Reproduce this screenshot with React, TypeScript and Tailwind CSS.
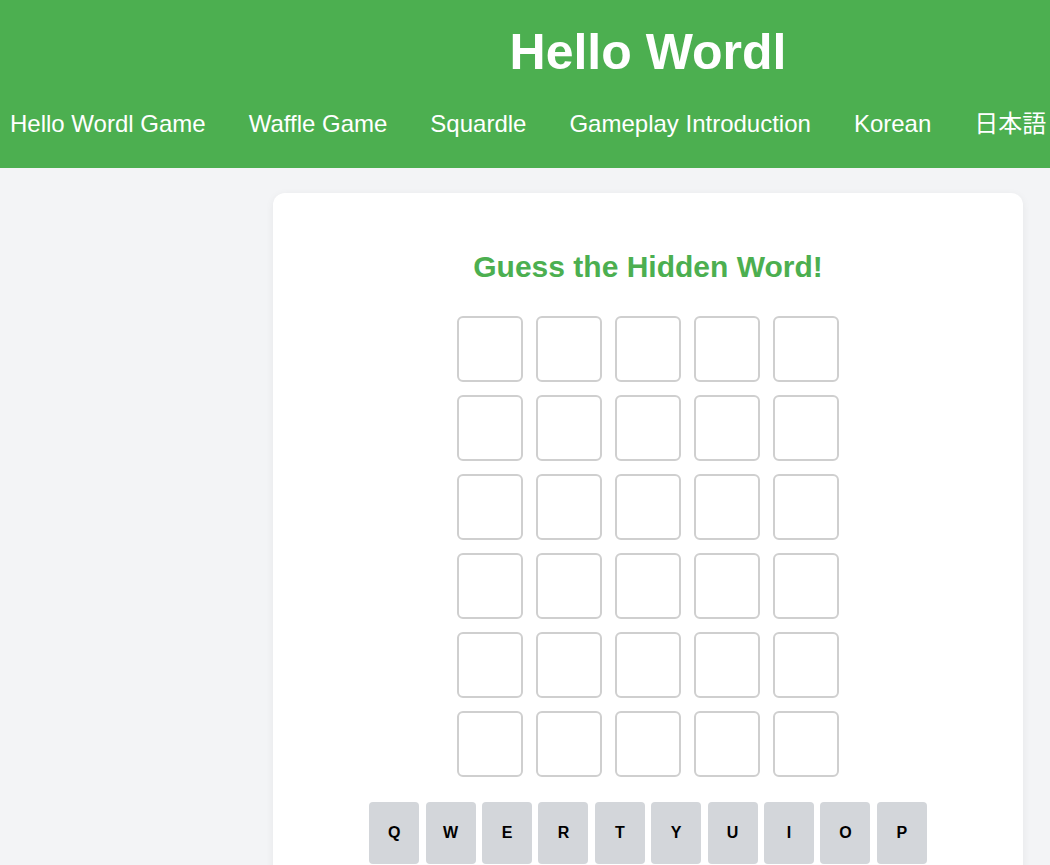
import React from 'react';

const NAV_LINKS = ['Hello Wordl Game', 'Waffle Game', 'Squardle', 'Gameplay Introduction', 'Korean', '日本語', 'Español'];
const KEY_ROWS = [
  ['Q', 'W', 'E', 'R', 'T', 'Y', 'U', 'I', 'O', 'P'],
  ['A', 'S', 'D', 'F', 'G', 'H', 'J', 'K', 'L'],
  ['ENTER', 'Z', 'X', 'C', 'V', 'B', 'N', 'M', '⌫'],
];

const App: React.FC = () => {
  const rows = Array.from({ length: 6 });
  const cols = Array.from({ length: 5 });

  return (
    <div className="w-[1296px] min-h-screen bg-[#f3f4f6] font-['Liberation_Sans','Noto_Sans_CJK_JP',sans-serif]">
      {/* Header */}
      <header className="bg-[#4caf50] text-white pt-[22px] pb-[30px]">
        <h1 className="text-center text-[50px] leading-[60px] font-bold">Hello Wordl</h1>
        <nav className="mt-[28px] flex gap-[43px] pl-[10px] whitespace-nowrap">
          {NAV_LINKS.map(link => (
            <a key={link} href="#" className="text-[24px] leading-[28px] text-white">
              {link}
            </a>
          ))}
        </nav>
      </header>

      {/* Game card */}
      <main className="pt-[25px]">
        <div className="mx-auto w-[750px] bg-white rounded-xl shadow-[0_2px_8px_rgba(0,0,0,0.06)] pt-[57px] pb-10">
          <h2 className="text-center text-[30px] leading-[34px] font-bold text-[#4caf50]">Guess the Hidden Word!</h2>

          <div className="mt-[32px] flex flex-col items-center gap-[13px]">
            {rows.map((_, r) => (
              <div key={r} className="flex gap-[13px]">
                {cols.map((_, c) => (
                  <div key={c} className="w-[66px] h-[66px] border-2 border-[#cfcfcf] rounded-md bg-white" />
                ))}
              </div>
            ))}
          </div>

          <div className="mt-[25px] flex flex-col items-center gap-[6px]">
            {KEY_ROWS.map((row, i) => (
              <div key={i} className="flex gap-[6.4px]">
                {row.map(k => (
                  <button
                    key={k}
                    className="h-[62px] min-w-[50px] px-2 rounded bg-[#d3d6da] text-[16px] font-bold text-black"
                  >
                    {k}
                  </button>
                ))}
              </div>
            ))}
          </div>
        </div>
      </main>
    </div>
  );
};

export default App;
